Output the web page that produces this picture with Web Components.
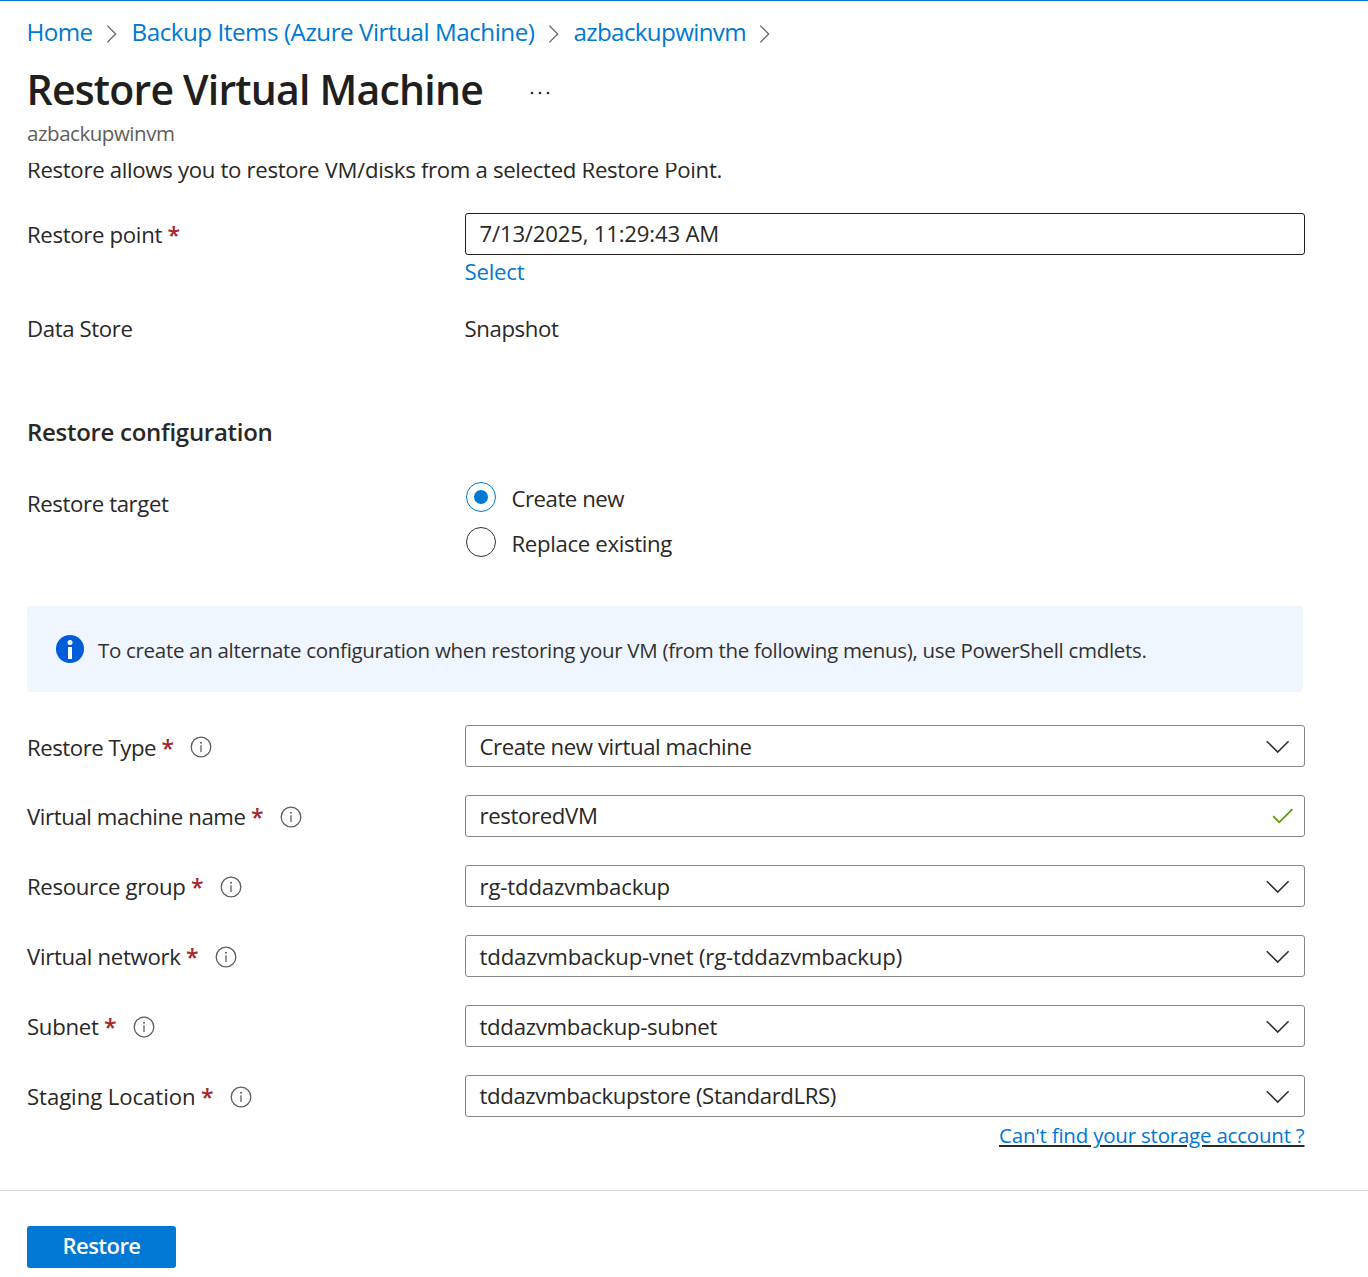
<!DOCTYPE html>
<html lang="en">
<head>
<meta charset="utf-8">
<title>Restore Virtual Machine</title>
<style>
  html, body { margin: 0; background: #fff; overflow: hidden; }
  body { font-family: "Open Sans", "Noto Sans", sans-serif; font-size: 22.2px; line-height: 30px; color: #292827; }
</style>
</head>
<body>
<restore-blade></restore-blade>

<script>
// Text run whose tracking is adjusted to the given advance width.
customElements.define('az-text', class extends HTMLElement {
  connectedCallback() {
    if (this.shadowRoot) return;
    this.attachShadow({ mode: 'open' }).innerHTML =
      '<style>:host{display:inline-block;white-space:pre;flex:none}</style><slot></slot>';
    const target = parseFloat(this.getAttribute('w'));
    if (target) {
      const natural = this.getBoundingClientRect().width;
      this.style.letterSpacing = ((target - natural) / this.textContent.length).toFixed(3) + 'px';
    }
  }
});

const define = (name, render) => customElements.define(name, class extends HTMLElement {
  connectedCallback() {
    if (this.shadowRoot) return;
    this.attachShadow({ mode: 'open' }).innerHTML = render(this);
  }
});

const ICONS = {
  crumb: [12, 20, '<path d="M1.3 1.6 9.7 10 1.3 18.4" fill="none" stroke="#605e5c" stroke-width="1.2"/>'],
  down: [24, 14, '<path d="M.8 1.2 11.7 12.1 22.6 1.2" fill="none" stroke="#323130" stroke-width="1.6"/>'],
  check: [22, 16, '<path d="M1.2 8.2 7.3 14.3 20.4 1.2" fill="none" stroke="#57a300" stroke-width="1.8"/>'],
  info: [22, 22, '<circle cx="11" cy="11" r="9.8" fill="none" stroke="#605e5c" stroke-width="1.3"/><path d="M11 9.2V16" stroke="#605e5c" stroke-width="1.3"/><circle cx="11" cy="6.7" r="1" fill="#605e5c"/>'],
  notice: [28, 28, '<circle cx="14" cy="14" r="14" fill="#015cda"/><circle cx="14" cy="7.4" r="2.5" fill="#fff"/><path d="M12 12h4v12h-4z" fill="#fff"/>'],
  more: [22, 6, '<g fill="#323130"><circle cx="3" cy="3" r="1.35"/><circle cx="11" cy="3" r="1.35"/><circle cx="19" cy="3" r="1.35"/></g>']
};
define('az-icon', el => {
  const [w, h, body] = ICONS[el.getAttribute('name')];
  return `<style>:host{display:block;flex:none}svg{display:block}</style>
    <svg width="${w}" height="${h}" viewBox="0 0 ${w} ${h}">${body}</svg>`;
});

define('az-breadcrumb', () => `
  <style>
    :host{display:flex;align-items:center;height:34px;padding:14px 0 0 26.5px;font-size:24.2px;line-height:34px;color:#0078d4}
    az-icon{margin:3px 14px 0 13px}
    az-icon.last{margin-right:0}
  </style>
  <az-text w="66">Home</az-text><az-icon name="crumb"></az-icon>
  <az-text w="403">Backup Items (Azure Virtual Machine)</az-text><az-icon name="crumb"></az-icon>
  <az-text w="172.5">azbackupwinvm</az-text><az-icon name="crumb" class="last"></az-icon>`);

define('az-title', () => `
  <style>
    :host{display:block;height:114px}
    .row{display:flex;align-items:center;height:60px;padding:10px 0 0 26.5px;font-size:41px;line-height:60px;font-weight:600;color:#201f1e}
    az-icon{margin:7px 0 0 45.5px}
    .sub{padding:0 0 0 27px;font-size:20.5px;line-height:28px;color:#605e5c}
  </style>
  <div class="row"><az-text w="456.5">Restore Virtual Machine</az-text><az-icon name="more"></az-icon></div>
  <div class="sub"><az-text w="147.5">azbackupwinvm</az-text></div>`);

define('az-field', el => `
  <style>
    :host{display:flex;box-sizing:border-box;align-items:flex-start;padding-left:27px}
    .label{display:flex;width:438px;flex:none;padding-top:var(--label-top,7px)}
    .star{width:11px;margin-left:5.5px;color:#a4262c;font-weight:600;font-size:23px;flex:none}
    az-icon{margin:var(--info-top,4px) 0 0 17.5px}
  </style>
  <div class="label"><az-text w="${el.getAttribute('w') - .5}">${el.getAttribute('label')}</az-text>
  ${el.hasAttribute('required') ? '<span class="star">*</span>' : ''}${el.hasAttribute('info') ? '<az-icon name="info"></az-icon>' : ''}</div>
  <slot></slot>`);

define('az-input', el => `
  <style>
    :host{display:flex;box-sizing:border-box;width:840px;height:42px;border:1px solid ${el.hasAttribute('dark') ? '#201f1e' : '#8a8886'};border-radius:3px;background:#fff;padding:0 14px 0 13.5px;align-items:center;justify-content:space-between}
    az-text{padding-top:${el.getAttribute('drop') || 0}px}
    az-icon[name=down]{margin-top:2px}
    az-icon[name=check]{margin-right:-4px}
  </style>
  <az-text w="${el.getAttribute('w') - .5}">${el.getAttribute('value')}</az-text>
  ${el.hasAttribute('icon') ? `<az-icon name="${el.getAttribute('icon')}"></az-icon>` : ''}`);

define('az-radio', el => `
  <style>
    :host{display:flex;align-items:flex-start;height:45px;padding-left:1px}
    .ring{box-sizing:border-box;width:30px;height:30px;border:1.5px solid #323130;border-radius:50%;display:flex;align-items:center;justify-content:center;margin-right:15.5px}
    :host([checked]) .ring{border-color:#0078d4}
    :host([checked]) .ring::after{content:"";width:14px;height:14px;border-radius:50%;background:#0078d4}
    az-text{margin-top:2px}
  </style>
  <span class="ring"></span><az-text w="${el.getAttribute('w')}">${el.getAttribute('label')}</az-text>`);

define('az-notice', () => `
  <style>
    :host{display:flex;box-sizing:border-box;width:1276px;height:86px;margin-left:27px;padding-left:29px;align-items:center;background:#eff6ff;border-radius:4px;font-size:20.5px;gap:14px;color:#323130}
    az-text{margin-top:1px}
  </style>
  <az-icon name="notice"></az-icon>
  <az-text w="1048.5">To create an alternate configuration when restoring your VM (from the following menus), use PowerShell cmdlets.</az-text>`);

define('az-footer', () => `
  <style>
    :host{display:block;box-sizing:border-box;height:87px;border-top:1px solid #d9d9d9;padding:35px 0 0 27px}
    button{display:flex;align-items:center;justify-content:center;width:149px;height:42px;padding:0 0 4px;border:0;border-radius:3px;background:#0078d4;color:#fff;font:600 22px/30px "Open Sans",sans-serif}
  </style>
  <button><az-text w="78">Restore</az-text></button>`);

define('restore-blade', () => `
  <style>
    :host{display:flex;box-sizing:border-box;flex-direction:column;width:1368px;height:1277px;background:#fff;border-top:1px solid #0078d4}
    .content{overflow:hidden;height:1027px;flex:none}
    .intro{height:58px;margin-top:-8px;padding-left:27px;box-sizing:border-box}
    .point{height:98px;--label-top:7px}
    .stack{display:flex;flex-direction:column}
    .select{color:#0078d4;margin:2px 0 0 -.5px}
    .store{height:104px;--label-top:3px}
    .store>*{margin:3px 0 0 -.5px}
    h2{margin:0;padding-left:27px;font-size:24px;line-height:34px;font-weight:600;height:67px;box-sizing:border-box}
    .target{height:124px;--label-top:7px}
    az-notice{margin-bottom:33px}
    .row{height:70px}
    .row.first{--label-top:8px;--info-top:3px}
    .help{display:flex;justify-content:flex-end;width:1304.5px;height:32px;margin-top:-25px;font-size:20.5px;line-height:30px}
    .help az-text{color:#0078d4;text-decoration:underline #292827 2px;text-underline-offset:2px}
    az-footer{margin-top:auto}
  </style>
  <az-breadcrumb></az-breadcrumb>
  <az-title></az-title>
  <div class="content">
    <div class="intro"><az-text w="695">Restore allows you to restore VM/disks from a selected Restore Point.</az-text></div>
    <az-field class="point" label="Restore point" w="135.5" required>
      <div class="stack"><az-input dark w="240" value="7/13/2025, 11:29:43 AM"></az-input><div class="select"><az-text w="60">Select</az-text></div></div>
    </az-field>
    <az-field class="store" label="Data Store" w="106"><az-text w="94">Snapshot</az-text></az-field>
    <h2><az-text w="245.5">Restore configuration</az-text></h2>
    <az-field class="target" label="Restore target" w="142">
      <div class="stack"><az-radio checked label="Create new" w="112.5"></az-radio><az-radio label="Replace existing" w="160.5"></az-radio></div>
    </az-field>
    <az-notice></az-notice>
    <az-field class="row first" label="Restore Type" w="129.5" required info><az-input w="272.5" value="Create new virtual machine" icon="down" drop="2"></az-input></az-field>
    <az-field class="row" label="Virtual machine name" w="219" required info><az-input w="118.5" value="restoredVM" icon="check"></az-input></az-field>
    <az-field class="row" label="Resource group" w="159" required info><az-input w="191" value="rg-tddazvmbackup" icon="down" drop="2"></az-input></az-field>
    <az-field class="row" label="Virtual network" w="154" required info><az-input w="423" value="tddazvmbackup-vnet (rg-tddazvmbackup)" icon="down" drop="2"></az-input></az-field>
    <az-field class="row" label="Subnet" w="72" required info><az-input w="238" value="tddazvmbackup-subnet" icon="down" drop="2"></az-input></az-field>
    <az-field class="row" label="Staging Location" w="169" required info><az-input w="357" value="tddazvmbackupstore (StandardLRS)" icon="down"></az-input></az-field>
    <div class="help"><az-text w="305.5">Can't find your storage account ?</az-text></div>
  </div>
  <az-footer></az-footer>`);
</script>
</body>
</html>
